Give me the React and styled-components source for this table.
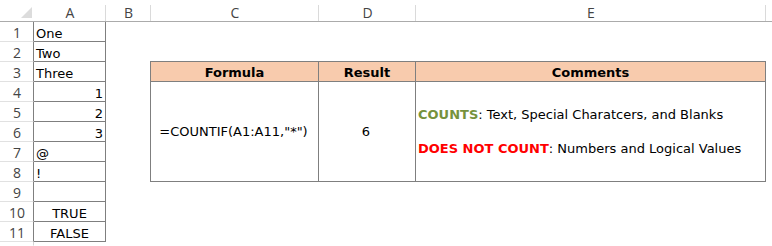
import React from "react";
import styled, { createGlobalStyle } from "styled-components";

const GlobalStyle = createGlobalStyle`
  html, body {
    margin: 0;
    padding: 0;
    background: #ffffff;
  }
  body {
    width: 772px;
    height: 246px;
    overflow: hidden;
  }
`;

const cellFont = `"DejaVu Sans", Verdana, sans-serif`;
const headFont = `"Open Sans", "Liberation Sans", Arial, sans-serif`;

const Sheet = styled.div`
  display: grid;
  grid-template-columns: 34px 72px 45px 168px 97px 350px 1fr;
  grid-template-rows: 22px repeat(11, 20px) 1fr;
  width: 772px;
  height: 246px;
  background: #fff;
  font-family: ${cellFont};
  font-size: 13px;
  color: #000;
`;

const Corner = styled.div`
  display: flex;
  align-items: flex-end;
  justify-content: flex-end;
  padding: 0 2px 3px 0;
  border-bottom: 1px solid #ababab;
  box-sizing: border-box;
`;

const ColHead = styled.div`
  position: relative;
  display: flex;
  align-items: center;
  justify-content: center;
  padding-top: 4px;
  box-sizing: border-box;
  border-bottom: 1px solid #ababab;
  font-family: ${headFont};
  font-size: 14px;
  color: #444;

  &::after {
    content: "";
    position: absolute;
    right: 0;
    top: 5px;
    bottom: 0;
    width: 1px;
    background: ${(p) => (p.$noLine ? "transparent" : "#dadada")};
  }
`;

const RowHead = styled.div`
  display: flex;
  align-items: center;
  justify-content: center;
  box-sizing: border-box;
  border-right: 1px solid ${(p) => (p.$filler ? "#d4d4d4" : "#7f7f7f")};
  border-bottom: 1px solid ${(p) => (p.$filler ? "transparent" : "#e1e1e1")};
  font-family: ${headFont};
  font-size: 14px;
  color: #444;
  padding: 2px 0 0 1px;
`;

const Cell = styled.div`
  display: flex;
  align-items: center;
  justify-content: ${(p) =>
    p.$align === "right" ? "flex-end" : p.$align === "center" ? "center" : "flex-start"};
  box-sizing: border-box;
  border-right: 1px solid #7f7f7f;
  border-bottom: 1px solid #7f7f7f;
  padding: 3px 2px 0 2px;
  white-space: nowrap;
`;

const Table = styled.div`
  grid-column: 4 / 7;
  grid-row: 4 / 10;
  margin: -1px 0 0 -1px;
  border: 1px solid #7f7f7f;
  display: grid;
  grid-template-columns: 168px 97px 1fr;
  grid-template-rows: 20px 1fr;
`;

const TH = styled.div`
  background: #f8cbad;
  display: flex;
  align-items: center;
  justify-content: center;
  box-sizing: border-box;
  border-bottom: 1px solid #7f7f7f;
  border-right: ${(p) => (p.$last ? "none" : "1px solid #7f7f7f")};
  font-weight: bold;
  padding-top: 1px;
`;

const TD = styled.div`
  display: flex;
  flex-direction: column;
  justify-content: center;
  align-items: ${(p) => (p.$left ? "flex-start" : "center")};
  gap: 19px;
  box-sizing: border-box;
  border-right: ${(p) => (p.$last ? "none" : "1px solid #7f7f7f")};
  padding: 0 2px 0 ${(p) => (p.$left ? "2px" : "0")};
  white-space: nowrap;
`;

const Tag = styled.span`
  font-weight: bold;
  color: ${(p) => p.$color};
`;

const rows = [
  { v: "One" },
  { v: "Two" },
  { v: "Three" },
  { v: "1", a: "right" },
  { v: "2", a: "right" },
  { v: "3", a: "right" },
  { v: "@" },
  { v: "!" },
  { v: "" },
  { v: "TRUE", a: "center" },
  { v: "FALSE", a: "center" },
];

export default function App() {
  return (
    <>
      <GlobalStyle />
      <Sheet>
        <Corner>
          <svg width="11" height="11" viewBox="0 0 11 11">
            <polygon points="11,0 11,11 0,11" fill="#dcdcdc" />
          </svg>
        </Corner>
        {["A", "B", "C", "D", "E"].map((c) => (
          <ColHead key={c}>{c}</ColHead>
        ))}
        <ColHead $noLine />

        {rows.map((r, i) => (
          <React.Fragment key={i}>
            <RowHead style={{ gridRow: i + 2, gridColumn: 1 }}>{i + 1}</RowHead>
            <Cell style={{ gridRow: i + 2, gridColumn: 2 }} $align={r.a}>
              {r.v}
            </Cell>
          </React.Fragment>
        ))}
        <RowHead $filler style={{ gridRow: 13, gridColumn: 1 }} />

        <Table>
          <TH>Formula</TH>
          <TH>Result</TH>
          <TH $last>Comments</TH>
          <TD>=COUNTIF(A1:A11,"*")</TD>
          <TD>6</TD>
          <TD $left $last>
            <div>
              <Tag $color="#76923c">COUNTS</Tag>: Text, Special Charatcers, and Blanks
            </div>
            <div>
              <Tag $color="#ff0000">DOES NOT COUNT</Tag>: Numbers and Logical Values
            </div>
          </TD>
        </Table>
      </Sheet>
    </>
  );
}
